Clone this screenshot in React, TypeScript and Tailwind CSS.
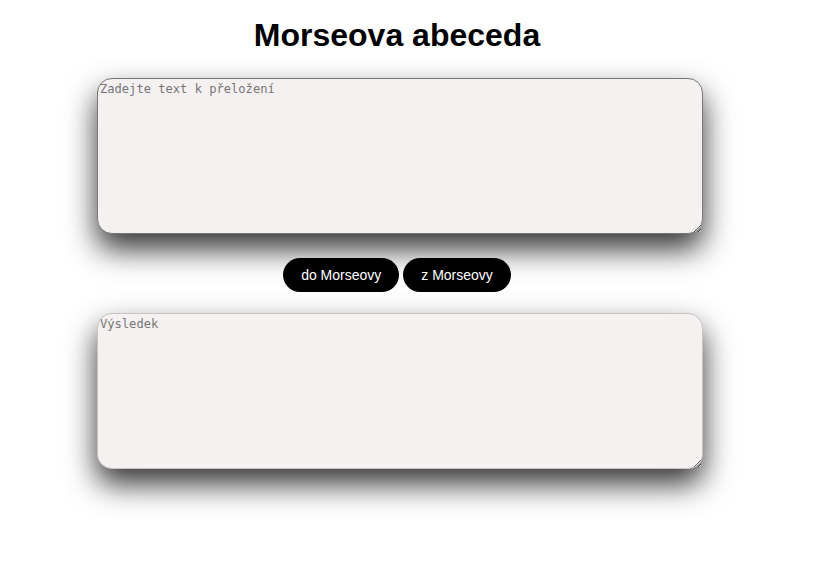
import React from "react";

const App = () => {
  return (
    <div className="min-h-[584px] w-full bg-white font-['Liberation_Sans',Arial,sans-serif]">
      <div className="flex w-[794px] flex-col items-center pt-[17px]">
        <h1 className="text-[32px] leading-[37px] font-bold text-black">Morseova abeceda</h1>
        <textarea
          placeholder="Zadejte text k přeložení"
          className="mt-[24px] ml-[6px] h-[156px] w-[606px] rounded-[15px] border border-[#767676] bg-[#f6f1f1] px-[2px] pt-[3px] pb-[1px] font-['DejaVu_Sans_Mono',monospace] text-[12.1px] leading-[15px] text-black shadow-[0_15px_30px_rgba(0,0,0,0.8)] placeholder:text-[#757575]"
        />
        <div className="mt-[24px] flex gap-[4px]">
          <button className="h-[34px] rounded-full bg-black px-[18px] text-[14px] text-white">do Morseovy</button>
          <button className="h-[34px] rounded-full bg-black px-[18px] text-[14px] text-white">z Morseovy</button>
        </div>
        <textarea
          placeholder="Výsledek"
          className="mt-[21px] ml-[6px] h-[156px] w-[606px] rounded-[15px] border border-[#c9c4c4] bg-[#f6f1f1] px-[2px] pt-[3px] pb-[1px] font-['DejaVu_Sans_Mono',monospace] text-[12.1px] leading-[15px] text-black shadow-[0_15px_30px_rgba(0,0,0,0.8)] placeholder:text-[#757575]"
        />
      </div>
    </div>
  );
};

export default App;
